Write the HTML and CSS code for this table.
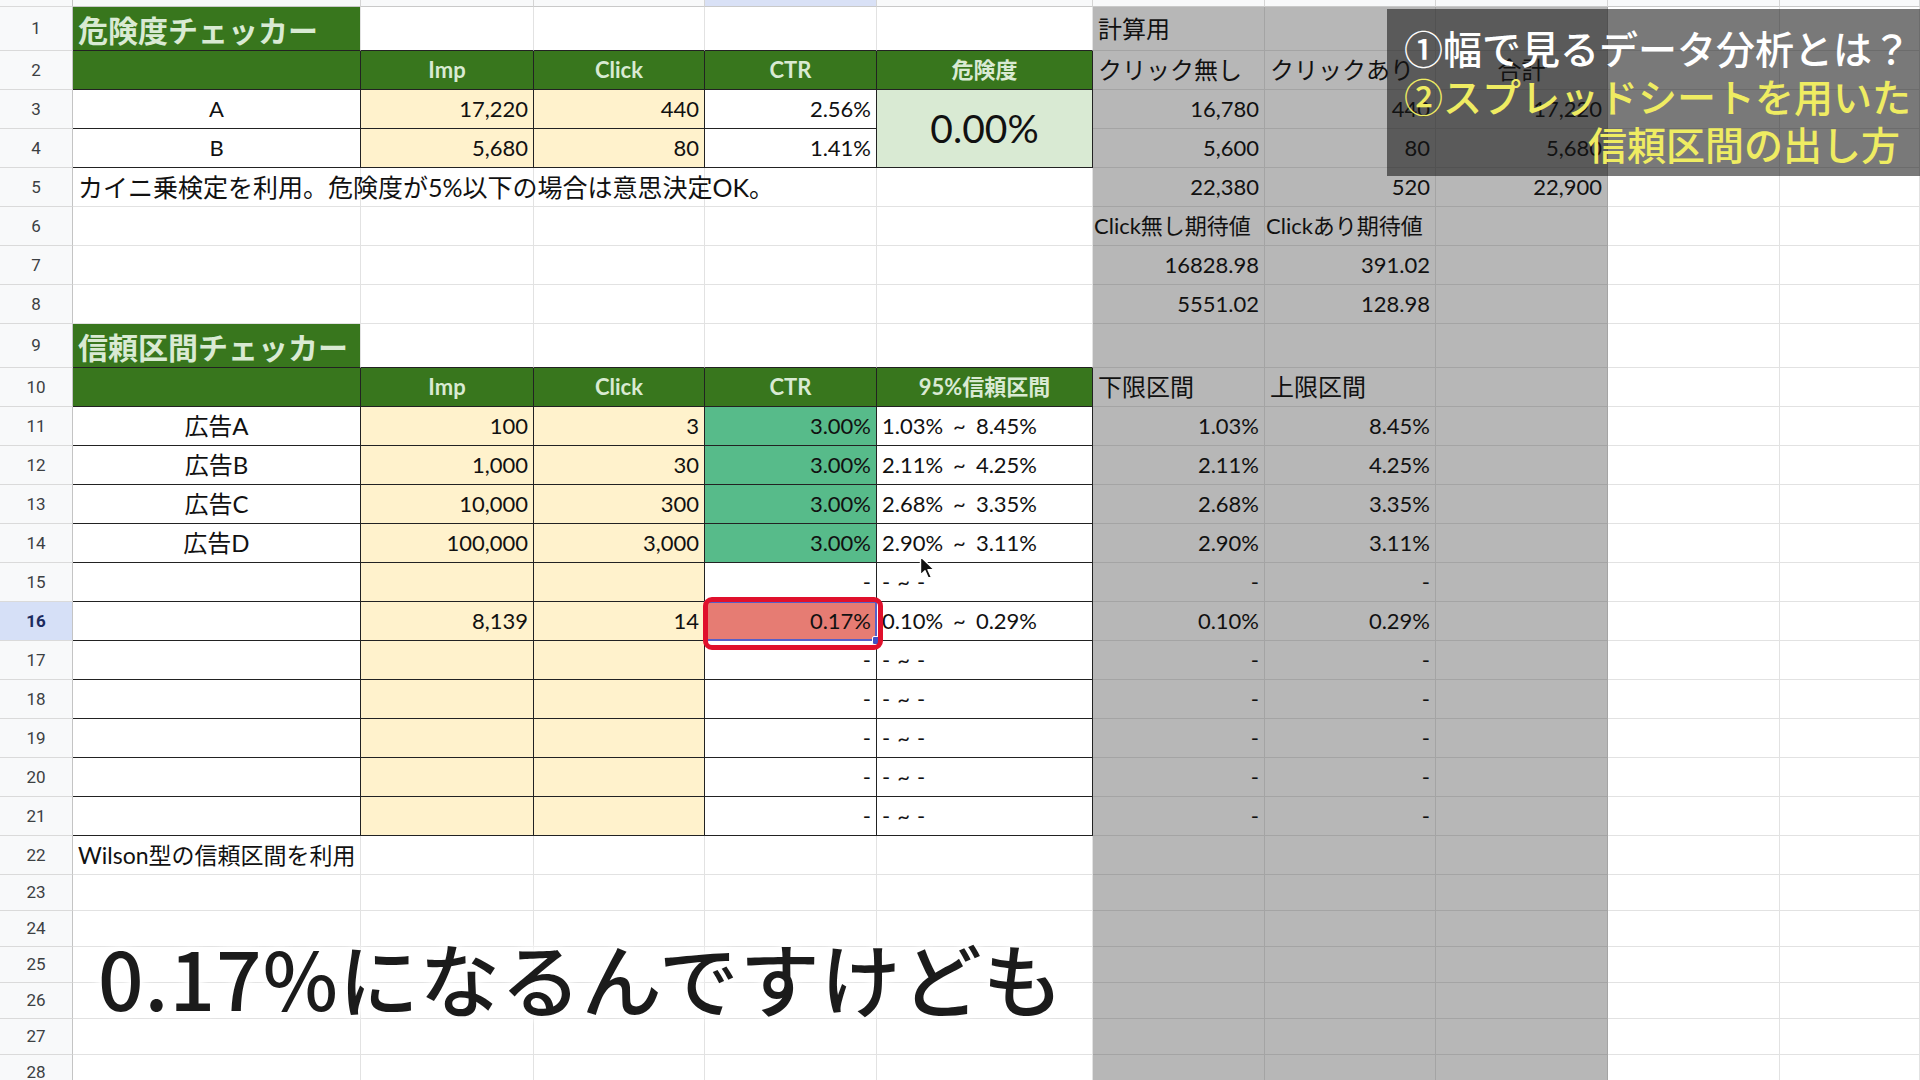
FILE: index.html
```html
<!DOCTYPE html>
<html lang="ja">
<head>
<meta charset="utf-8">
<title>信頼区間チェッカー</title>
<link rel="stylesheet" href="styles.css">
</head>
<body>
<table class="sheet">
<colgroup>
<col class="w-rh"><col class="w-a"><col class="w-b"><col class="w-c"><col class="w-d"><col class="w-e"><col class="w-f"><col class="w-g"><col class="w-h"><col class="w-i"><col class="w-j">
</colgroup>
<tr class="h0"><td class="rh corner"></td><td class="ch"></td><td class="ch"></td><td class="ch"></td><td class="ch csel"></td><td class="ch"></td><td class="ch"></td><td class="ch"></td><td class="ch"></td><td class="ch"></td><td class="ch"></td></tr>
<tr class="h1"><td class="rh">1</td><td class="tt bb">危険度チェッカー</td><td class="bb"></td><td class="bb"></td><td class="bb"></td><td class="bb"></td><td class="g jp">計算用</td><td class="g"></td><td class="g"></td><td></td><td></td></tr>
<tr class="h"><td class="rh">2</td><td class="hd br bb"></td><td class="hd br bb">Imp</td><td class="hd br bb">Click</td><td class="hd br bb">CTR</td><td class="hd br bb">危険度</td><td class="g jp">クリック無し</td><td class="g jp">クリックあり</td><td class="g jp c">合計</td><td></td><td></td></tr>
<tr class="h"><td class="rh">3</td><td class="c br bb">A</td><td class="y r br bb">17,220</td><td class="y r br bb">440</td><td class="r br bb">2.56%</td><td class="lg c br bb big" rowspan="2">0.00%</td><td class="g r">16,780</td><td class="g r">440</td><td class="g r">17,220</td><td></td><td></td></tr>
<tr class="h"><td class="rh">4</td><td class="c br bb">B</td><td class="y r br bb">5,680</td><td class="y r br bb">80</td><td class="r br bb">1.41%</td><td class="g r">5,600</td><td class="g r">80</td><td class="g r">5,680</td><td></td><td></td></tr>
<tr class="h"><td class="rh">5</td><td class="jp note">カイニ乗検定を利用。危険度が5%以下の場合は意思決定OK。</td><td></td><td></td><td></td><td></td><td class="g r">22,380</td><td class="g r">520</td><td class="g r">22,900</td><td></td><td></td></tr>
<tr class="h"><td class="rh">6</td><td></td><td></td><td></td><td></td><td></td><td class="g clip">Click無し期待値</td><td class="g clip">Clickあり期待値</td><td class="g"></td><td></td><td></td></tr>
<tr class="h"><td class="rh">7</td><td></td><td></td><td></td><td></td><td></td><td class="g r">16828.98</td><td class="g r">391.02</td><td class="g"></td><td></td><td></td></tr>
<tr class="h"><td class="rh">8</td><td></td><td></td><td></td><td></td><td></td><td class="g r">5551.02</td><td class="g r">128.98</td><td class="g"></td><td></td><td></td></tr>
<tr class="h1"><td class="rh">9</td><td class="tt bb">信頼区間チェッカー</td><td class="bb"></td><td class="bb"></td><td class="bb"></td><td class="bb"></td><td class="g"></td><td class="g"></td><td class="g"></td><td></td><td></td></tr>
<tr class="h"><td class="rh">10</td><td class="hd br bb"></td><td class="hd br bb">Imp</td><td class="hd br bb">Click</td><td class="hd br bb">CTR</td><td class="hd br bb">95%信頼区間</td><td class="g jp">下限区間</td><td class="g jp">上限区間</td><td class="g"></td><td></td><td></td></tr>
<tr class="h"><td class="rh">11</td><td class="c jp br bb">広告A</td><td class="y r br bb">100</td><td class="y r br bb">3</td><td class="gn r br bb">3.00%</td><td class="br bb">1.03%<span class="tl">~</span>8.45%</td><td class="g r">1.03%</td><td class="g r">8.45%</td><td class="g"></td><td></td><td></td></tr>
<tr class="h"><td class="rh">12</td><td class="c jp br bb">広告B</td><td class="y r br bb">1,000</td><td class="y r br bb">30</td><td class="gn r br bb">3.00%</td><td class="br bb">2.11%<span class="tl">~</span>4.25%</td><td class="g r">2.11%</td><td class="g r">4.25%</td><td class="g"></td><td></td><td></td></tr>
<tr class="h"><td class="rh">13</td><td class="c jp br bb">広告C</td><td class="y r br bb">10,000</td><td class="y r br bb">300</td><td class="gn r br bb">3.00%</td><td class="br bb">2.68%<span class="tl">~</span>3.35%</td><td class="g r">2.68%</td><td class="g r">3.35%</td><td class="g"></td><td></td><td></td></tr>
<tr class="h"><td class="rh">14</td><td class="c jp br bb">広告D</td><td class="y r br bb">100,000</td><td class="y r br bb">3,000</td><td class="gn r br bb">3.00%</td><td class="br bb">2.90%<span class="tl">~</span>3.11%</td><td class="g r">2.90%</td><td class="g r">3.11%</td><td class="g"></td><td></td><td></td></tr>
<tr class="h"><td class="rh">15</td><td class="br bb"></td><td class="y br bb"></td><td class="y br bb"></td><td class="r br bb">-</td><td class="br bb">-<span class="ts">~</span>-</td><td class="g r">-</td><td class="g r">-</td><td class="g"></td><td></td><td></td></tr>
<tr class="h"><td class="rh rsel">16</td><td class="br bb"></td><td class="y r br bb">8,139</td><td class="y r br bb">14</td><td class="rd r br bb">0.17%</td><td class="br bb">0.10%<span class="tl">~</span>0.29%</td><td class="g r">0.10%</td><td class="g r">0.29%</td><td class="g"></td><td></td><td></td></tr>
<tr class="h"><td class="rh">17</td><td class="br bb"></td><td class="y br bb"></td><td class="y br bb"></td><td class="r br bb">-</td><td class="br bb">-<span class="ts">~</span>-</td><td class="g r">-</td><td class="g r">-</td><td class="g"></td><td></td><td></td></tr>
<tr class="h"><td class="rh">18</td><td class="br bb"></td><td class="y br bb"></td><td class="y br bb"></td><td class="r br bb">-</td><td class="br bb">-<span class="ts">~</span>-</td><td class="g r">-</td><td class="g r">-</td><td class="g"></td><td></td><td></td></tr>
<tr class="h"><td class="rh">19</td><td class="br bb"></td><td class="y br bb"></td><td class="y br bb"></td><td class="r br bb">-</td><td class="br bb">-<span class="ts">~</span>-</td><td class="g r">-</td><td class="g r">-</td><td class="g"></td><td></td><td></td></tr>
<tr class="h"><td class="rh">20</td><td class="br bb"></td><td class="y br bb"></td><td class="y br bb"></td><td class="r br bb">-</td><td class="br bb">-<span class="ts">~</span>-</td><td class="g r">-</td><td class="g r">-</td><td class="g"></td><td></td><td></td></tr>
<tr class="h"><td class="rh">21</td><td class="br bb"></td><td class="y br bb"></td><td class="y br bb"></td><td class="r br bb">-</td><td class="br bb">-<span class="ts">~</span>-</td><td class="g r">-</td><td class="g r">-</td><td class="g"></td><td></td><td></td></tr>
<tr class="h"><td class="rh">22</td><td class="jp note2">Wilson型の信頼区間を利用</td><td></td><td></td><td></td><td></td><td class="g"></td><td class="g"></td><td class="g"></td><td></td><td></td></tr>
<tr class="hs"><td class="rh">23</td><td></td><td></td><td></td><td></td><td></td><td class="g"></td><td class="g"></td><td class="g"></td><td></td><td></td></tr>
<tr class="hs"><td class="rh">24</td><td></td><td></td><td></td><td></td><td></td><td class="g"></td><td class="g"></td><td class="g"></td><td></td><td></td></tr>
<tr class="hs"><td class="rh">25</td><td></td><td></td><td></td><td></td><td></td><td class="g"></td><td class="g"></td><td class="g"></td><td></td><td></td></tr>
<tr class="hs"><td class="rh">26</td><td></td><td></td><td></td><td></td><td></td><td class="g"></td><td class="g"></td><td class="g"></td><td></td><td></td></tr>
<tr class="hs"><td class="rh">27</td><td></td><td></td><td></td><td></td><td></td><td class="g"></td><td class="g"></td><td class="g"></td><td></td><td></td></tr>
<tr class="hs"><td class="rh">28</td><td></td><td></td><td></td><td></td><td></td><td class="g"></td><td class="g"></td><td class="g"></td><td></td><td></td></tr>
</table>

<div class="cell-select"></div>
<div class="fill-handle"></div>
<div class="red-mark"></div>

<svg class="cursor" width="18" height="26" viewBox="0 0 18 26" aria-hidden="true">
<path d="M1.5 1.5 L1.5 20 L6 15.8 L9.3 23.2 L12.3 21.9 L9 14.6 L15 14.6 Z" fill="#111" stroke="#fff" stroke-width="1.4" stroke-linejoin="round"/>
</svg>

<div class="overlay">
<div class="ov-line ov-white">①幅で見るデータ分析とは？</div>
<div class="ov-line ov-yellow">②スプレッドシートを用いた</div>
<div class="ov-line ov-yellow ov-right">信頼区間の出し方</div>
</div>

<div class="caption">0.17%になるんですけども</div>
</body>
</html>
```

FILE: styles.css
```css
html, body {
  margin: 0;
  padding: 0;
}
body {
  width: 1920px;
  height: 1080px;
  overflow: hidden;
  position: relative;
  background: #fff;
  font-family: Lato, "Noto Sans CJK JP", sans-serif;
}

.sheet {
  border-collapse: separate;
  border-spacing: 0;
  table-layout: fixed;
  width: 1920px;
}
.w-rh { width: 73px; }
.w-a { width: 288px; }
.w-b { width: 173px; }
.w-c { width: 171px; }
.w-d { width: 172px; }
.w-e { width: 216px; }
.w-f { width: 172px; }
.w-g { width: 171px; }
.w-h { width: 172px; }
.w-i { width: 172px; }
.w-j { width: 140px; }

.sheet td {
  box-sizing: border-box;
  border-right: 1px solid #e2e2e2;
  border-bottom: 1px solid #e2e2e2;
  padding: 0 5px;
  white-space: nowrap;
  font-size: 22px;
  line-height: 1;
  color: #111;
  vertical-align: middle;
  overflow: visible;
}

.h0 { height: 7px; }
.h1 { height: 44px; }
.h { height: 39px; }
.hs { height: 36px; }

.h0 td { padding: 0; font-size: 0; background: #f8f9fa; border-bottom: 1px solid #c9c9c9; border-right: 1px solid #d5d5d5; }
.h0 td.csel { background: #d9e1f6; }
.h0 td.corner { background: #e9eaec; }

.sheet td.rh {
  background: #f8f9fa;
  text-align: center;
  font-family: Roboto, "Liberation Sans", Arial, sans-serif;
  font-size: 17px;
  color: #3c4043;
  border-right: 1px solid #c4c4c4;
  border-bottom: 1px solid #dadada;
  padding: 0;
}
.sheet td.rsel {
  background: #d6e0f7;
  color: #1c2b5e;
  font-weight: 700;
}

.sheet td.g {
  background: #b7b7b7;
  border-right-color: #a4a4a4;
  border-bottom-color: #a4a4a4;
}

.sheet td.tt {
  background: #38761d;
  color: #d9ead3;
  font-family: "Noto Sans CJK JP", sans-serif;
  font-weight: 700;
  font-size: 30px;
  padding-left: 5px;
}
.sheet td.hd {
  background: #38761d;
  color: #d9ead3;
  font-weight: 700;
  text-align: center;
  font-size: 22px;
}

.sheet td.y { background: #fff2cc; }
.sheet td.gn { background: #57bb8a; }
.sheet td.lg { background: #d9ead3; }
.sheet td.rd { background: #e67c73; }

.sheet td.r { text-align: right; }
.sheet td.c { text-align: center; }
.sheet td.jp { font-size: 24px; }
.sheet td.note { font-size: 25px; }
.sheet td.note2 { font-size: 23px; }
.sheet td.big { font-size: 39px; }
.sheet td.clip { overflow: hidden; font-size: 22px; padding: 0 1px; }

.tl { margin: 0 10px; }
.ts { margin: 0 7px; }

.sheet td.br { border-right: 1px solid #222; }
.sheet td.bb { border-bottom: 1px solid #222; }

.cell-select {
  position: absolute;
  left: 704px;
  top: 601px;
  width: 173px;
  height: 40px;
  box-sizing: border-box;
  border: 2px solid #5560c8;
}
.fill-handle {
  position: absolute;
  left: 872px;
  top: 636px;
  width: 7px;
  height: 7px;
  background: #3f4fc4;
  border: 1px solid #fff;
  border-radius: 2px;
}
.red-mark {
  position: absolute;
  left: 703px;
  top: 597px;
  width: 180px;
  height: 53px;
  box-sizing: border-box;
  border: 5px solid #e0102c;
  border-radius: 9px;
}

.cursor {
  position: absolute;
  left: 919px;
  top: 555px;
}

.overlay {
  position: absolute;
  left: 1387px;
  top: 9px;
  right: 0;
  height: 167px;
  box-sizing: border-box;
  padding: 14px 16px 0 17px;
  background: rgba(20, 20, 20, 0.57);
  font-family: "Noto Sans CJK JP", sans-serif;
  font-weight: 500;
  font-size: 39px;
  line-height: 48px;
}
.ov-line { white-space: nowrap; }
.ov-white { color: #ffffff; }
.ov-yellow { color: #efec62; }
.ov-right { text-align: right; padding-right: 4px; }

.caption {
  position: absolute;
  left: 98px;
  top: 926px;
  font-family: "Noto Sans CJK JP", sans-serif;
  font-weight: 500;
  font-size: 80px;
  line-height: 100px;
  color: #1b1b1b;
  letter-spacing: 1px;
  white-space: nowrap;
  text-shadow: 0 0 4px #fff, 0 0 8px #fff, 0 0 12px #fff, 0 0 16px #fff;
}
```
